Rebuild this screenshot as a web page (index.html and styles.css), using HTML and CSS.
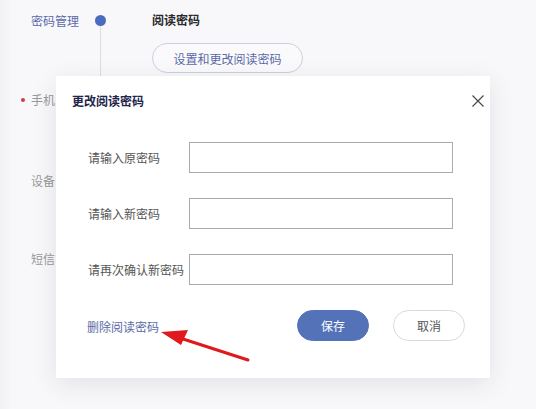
FILE: index.html
```html
<!DOCTYPE html>
<html lang="zh">
<head>
<meta charset="utf-8">
<link rel="stylesheet" href="styles.css">
</head>
<body>
<div class="page">
  <div class="row row-first">
    <div class="label label-accent">密码管理</div>
    <div class="track"><span class="dot"></span></div>
    <div class="content">
      <div class="section-title">阅读密码</div>
      <button class="pill">设置和更改阅读密码</button>
    </div>
  </div>
  <div class="row row-phone">
    <div class="label label-cut"><span class="req"></span>手机</div>
  </div>
  <div class="row row-device">
    <div class="label label-cut">设备</div>
  </div>
  <div class="row row-sms">
    <div class="label label-cut">短信</div>
  </div>
  <div class="line"></div>

  <div class="modal">
    <div class="modal-head">
      <div class="modal-title">更改阅读密码</div>
      <svg class="close" width="12" height="12" viewBox="0 0 12 12"><path d="M0.5 0.5 L11.5 11.5 M11.5 0.5 L0.5 11.5" stroke="#444" stroke-width="1.1" fill="none"/></svg>
    </div>
    <div class="form">
      <div class="field"><span class="flabel">请输入原密码</span><span class="input"></span></div>
      <div class="field"><span class="flabel">请输入新密码</span><span class="input"></span></div>
      <div class="field"><span class="flabel">请再次确认新密码</span><span class="input"></span></div>
    </div>
    <div class="modal-foot">
      <a class="del">删除阅读密码</a>
      <div class="btns">
        <button class="btn btn-primary">保存</button>
        <button class="btn btn-ghost">取消</button>
      </div>
    </div>
  </div>

  <svg class="arrow" width="536" height="409" viewBox="0 0 536 409">
    <path d="M248 360 L180 338" stroke="#e0191c" stroke-width="3" stroke-linecap="round" fill="none"/>
    <path d="M161 332 L188 330 L181 345 Z" fill="#e0191c"/>
  </svg>
</div>
</body>
</html>
```
FILE: styles.css
```css
html, body {
  margin: 0;
  padding: 0;
}
body {
  width: 536px;
  height: 409px;
  overflow: hidden;
  background: #f8f8fa;
  font-family: "Noto Sans CJK SC", "Microsoft YaHei", sans-serif;
  font-size: 12px;
  color: #333;
}
.page {
  position: relative;
  width: 536px;
  height: 409px;
  background: linear-gradient(to right, #f1f1f3 0, #f8f8fa 12px, #f8f8fa 100%);
}
.row {
  display: flex;
  align-items: flex-start;
  padding-left: 31px;
}
.label {
  width: 62px;
  line-height: 16px;
  color: #999;
  position: relative;
  white-space: nowrap;
}
.label-cut {
  width: 24px;
}
.label-accent {
  color: #5b6aa8;
}
.req {
  position: absolute;
  left: -10px;
  top: 6px;
  width: 4px;
  height: 4px;
  border-radius: 50%;
  background: #c8404a;
}
.row-first {
  padding-top: 13px;
}
.track {
  width: 14px;
  display: flex;
  justify-content: center;
  padding-top: 2px;
}
.dot {
  width: 11px;
  height: 11px;
  border-radius: 50%;
  background: #4a6bbf;
  position: relative;
  z-index: 1;
}
.content {
  margin-left: 45px;
  display: flex;
  flex-direction: column;
  align-items: flex-start;
}
.section-title {
  font-weight: bold;
  color: #2a2a2a;
  line-height: 16px;
  margin-top: -1px;
}
.pill {
  margin-top: 15px;
  width: 151px;
  height: 30px;
  border-radius: 15px;
  border: 1px solid #ccd0dc;
  background: #fafafc;
  color: #5b6aa8;
  font-family: inherit;
  font-size: 12px;
  padding: 0;
}
.row-phone { margin-top: 19px; }
.row-device { margin-top: 65px; }
.row-sms { margin-top: 62px; }
.line {
  position: absolute;
  left: 100px;
  top: 22px;
  width: 1px;
  height: 90px;
  background: #dcdce2;
}
.modal {
  position: absolute;
  left: 56px;
  top: 76px;
  width: 434px;
  height: 302px;
  background: #fff;
  box-shadow: 0 6px 24px rgba(40, 40, 70, 0.10);
  box-sizing: border-box;
}
.modal-head {
  display: flex;
  justify-content: space-between;
  align-items: center;
  padding: 17px 6px 0 16px;
}
.modal-title {
  font-weight: bold;
  color: #22254a;
  line-height: 16px;
}
.close {
  display: block;
  margin-top: -1px;
}
.form {
  padding: 33px 0 0 32px;
  display: flex;
  flex-direction: column;
  gap: 25px;
}
.field {
  display: flex;
  align-items: center;
}
.flabel {
  width: 101px;
  color: #555;
  line-height: 16px;
  white-space: nowrap;
}
.input {
  width: 264px;
  height: 31px;
  box-sizing: border-box;
  border: 1px solid #ababab;
  background: #fff;
}
.modal-foot {
  display: flex;
  align-items: center;
  justify-content: space-between;
  padding: 25px 25px 0 31px;
}
.del {
  color: #5b6aa8;
  line-height: 16px;
  margin-top: 3px;
}
.btns {
  display: flex;
  gap: 24px;
}
.btn {
  width: 72px;
  height: 31px;
  border-radius: 16px;
  font-family: inherit;
  font-size: 12px;
  padding: 0;
}
.btn-primary {
  background: #5472b8;
  border: 1px solid #5472b8;
  color: #fff;
}
.btn-ghost {
  background: #fff;
  border: 1px solid #d8dae2;
  color: #555;
}
.arrow {
  position: absolute;
  left: 0;
  top: 0;
  pointer-events: none;
}
```
